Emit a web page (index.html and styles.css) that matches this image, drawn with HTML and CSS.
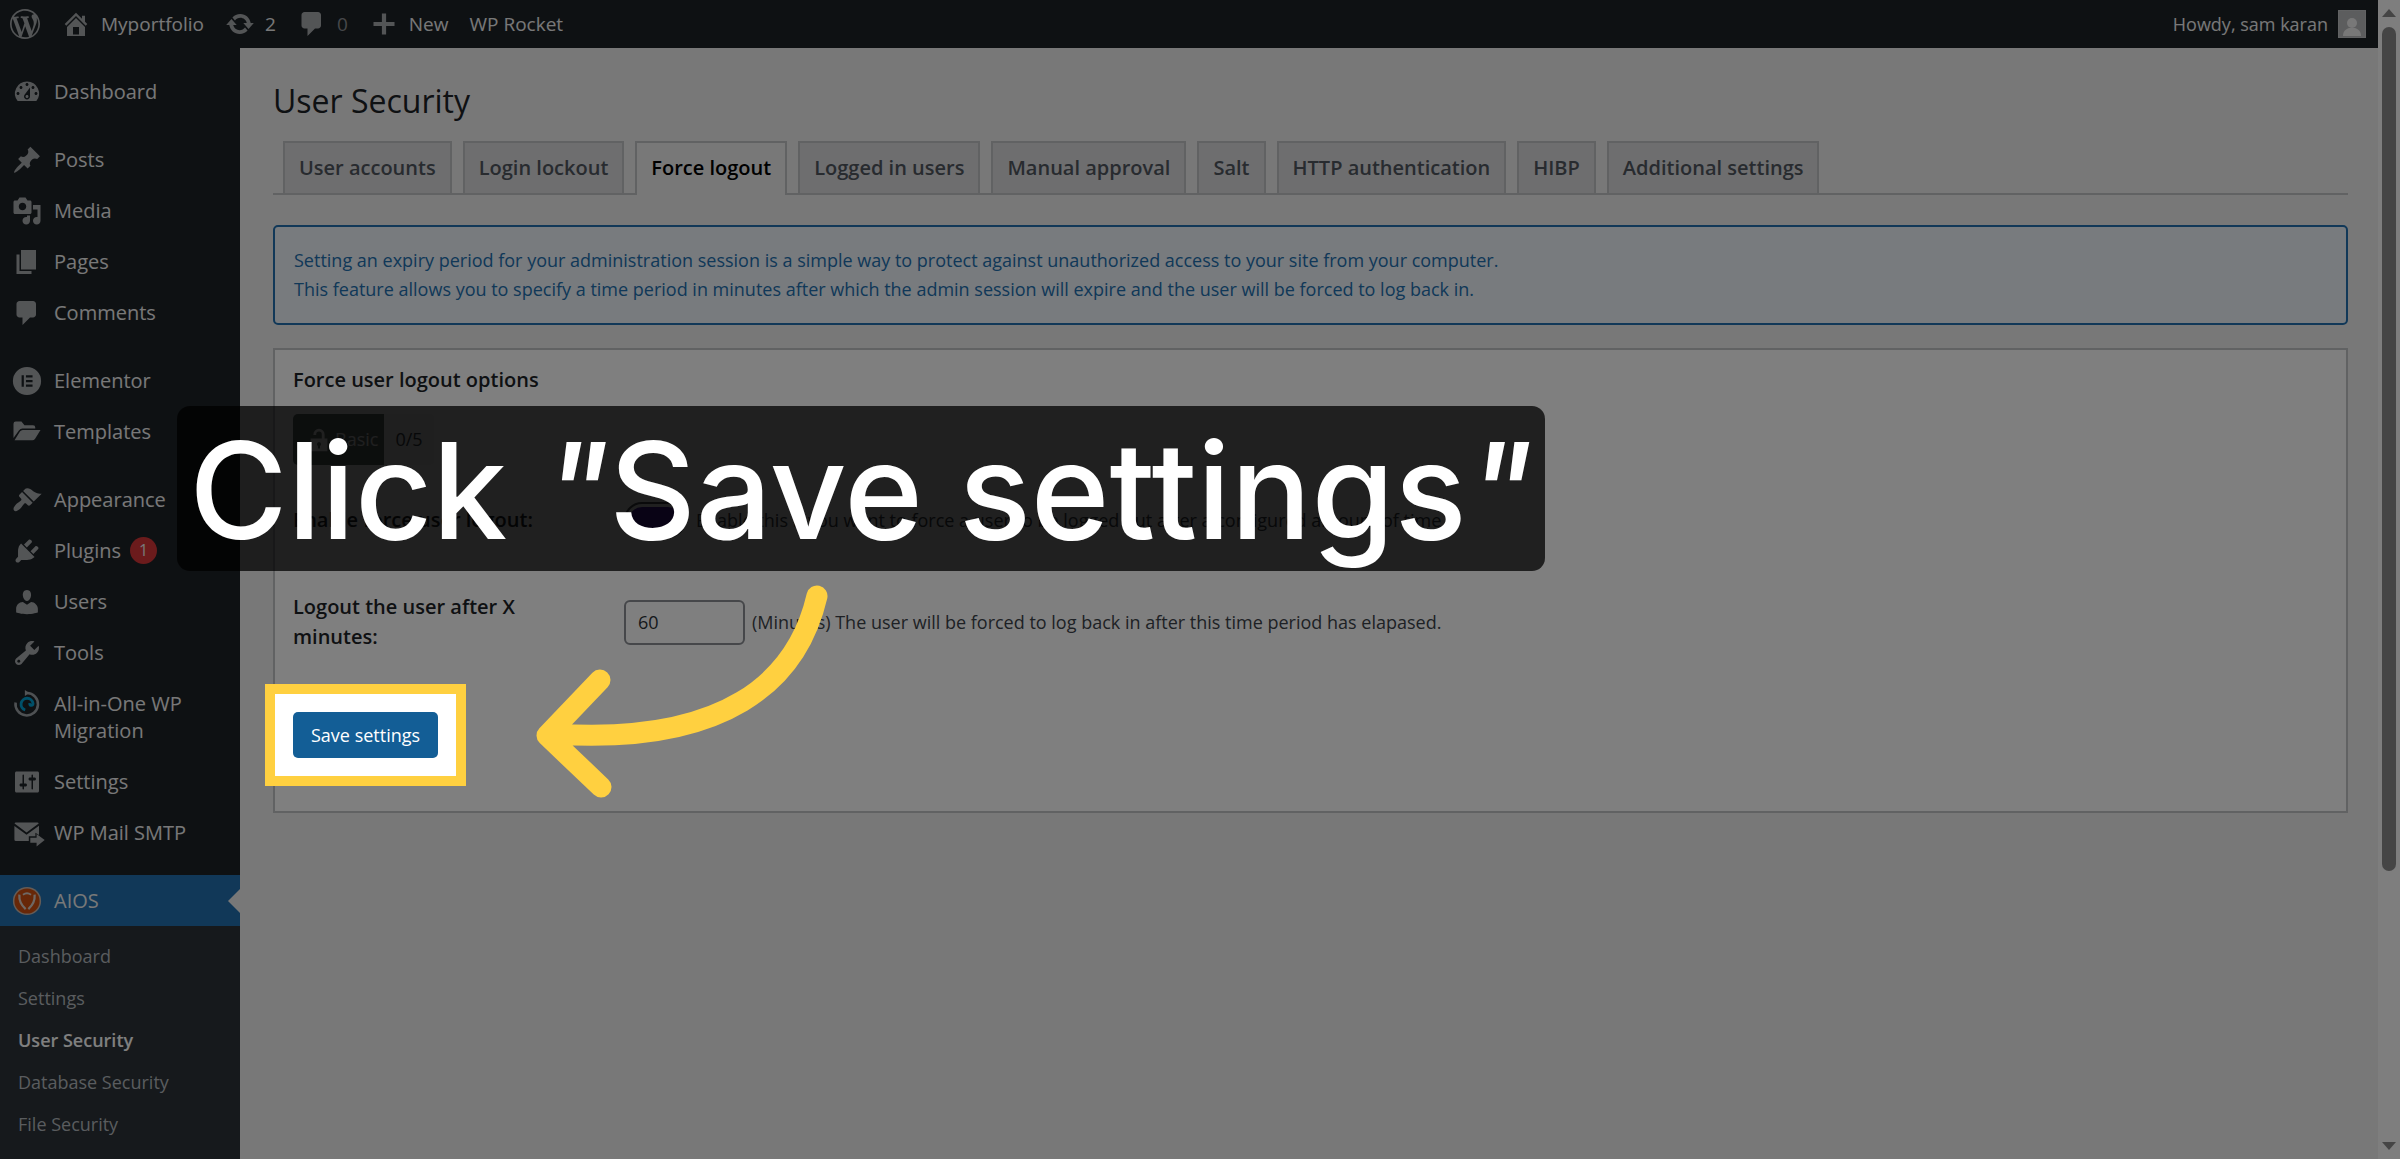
FILE: index.html
```html
<!DOCTYPE html>
<html lang="en">
<head>
<meta charset="utf-8">
<title>User Security</title>
<link rel="stylesheet" href="styles.css">
</head>
<body>
<div class="window">
  <div class="site">
    <header class="adminbar">
      <nav class="adminbar-group" aria-label="Toolbar">
        <a class="bar-item" href="#" aria-label="About WordPress"><svg class="icon wp" viewBox="0 0 20 20"><path d="M20 10c0-5.51-4.49-10-10-10C4.48 0 0 4.49 0 10c0 5.52 4.48 10 10 10 5.51 0 10-4.48 10-10zM7.78 15.37L4.37 6.22c.55-.02 1.17-.08 1.17-.08.5-.06.44-1.13-.06-1.11 0 0-1.45.11-2.37.11-.18 0-.37 0-.58-.01C4.12 2.69 6.87 1.11 10 1.11c2.33 0 4.45.87 6.05 2.34-.68-.11-1.65.39-1.65 1.58 0 .74.45 1.36.9 2.1.35.61.55 1.36.55 2.46 0 1.49-1.4 5-1.4 5l-3.03-8.37c.54-.02.82-.17.82-.17.5-.05.44-1.25-.06-1.22 0 0-1.44.12-2.38.12-.87 0-2.33-.12-2.33-.12-.5-.03-.56 1.2-.06 1.22l.92.08 1.26 3.41zM17.41 10c.24-.64.74-1.87.43-4.25.7 1.29 1.05 2.71 1.05 4.25 0 3.29-1.73 6.24-4.4 7.78.97-2.59 1.94-5.2 2.92-7.78zM6.1 18.09C3.12 16.65 1.11 13.53 1.11 10c0-1.3.23-2.48.72-3.59C3.25 10.3 4.67 14.2 6.1 18.09zm4.03-6.63l2.58 6.98c-.86.29-1.76.45-2.71.45-.79 0-1.57-.11-2.29-.33.81-2.38 1.62-4.74 2.42-7.1z"/></svg></a>
        <a class="bar-item" href="#"><svg class="icon" viewBox="0 0 20 20"><path d="M16 8.5l1.53 1.53-1.06 1.06L10 4.6l-6.47 6.49-1.06-1.06L10 2.5l4 4v-2h2v4zm-6-2.46l6 5.99V18H4v-5.97zM12 17v-5H8v5h4z"/></svg>Myportfolio</a>
        <a class="bar-item" href="#"><svg class="icon" viewBox="0 0 20 20"><path d="M10.2 3.28c3.53 0 6.43 2.61 6.92 6h2.08l-3.5 4-3.5-4h2.32c-.45-1.97-2.21-3.45-4.32-3.45-1.45 0-2.73.71-3.54 1.78L4.95 5.66C6.23 4.2 8.11 3.28 10.2 3.28zm-.4 13.44c-3.52 0-6.43-2.61-6.92-6H.8l3.5-4c1.17 1.33 2.33 2.67 3.5 4H5.48c.45 1.97 2.21 3.45 4.32 3.45 1.45 0 2.73-.71 3.54-1.78l1.71 1.95c-1.28 1.46-3.15 2.38-5.25 2.38z"/></svg>2</a>
        <a class="bar-item muted" href="#"><svg class="icon" viewBox="0 0 20 20"><path d="M5 2h9c1.1 0 2 .9 2 2v7c0 1.1-.9 2-2 2h-2l-5 5v-5H5c-1.1 0-2-.9-2-2V4c0-1.1.9-2 2-2z"/></svg>0</a>
        <a class="bar-item" href="#"><svg class="icon" viewBox="0 0 20 20"><path d="M17 8.600v2.800h-5.600V17H8.600v-5.600H3V8.600h5.600V3h2.800v5.600z"/></svg>New</a>
        <a class="bar-item" href="#">WP Rocket</a>
      </nav>
      <a class="bar-item account" href="#">Howdy, sam karan
        <svg class="avatar" viewBox="0 0 28 28"><rect width="28" height="28" fill="#c3c4c7"/><rect x="1" y="1" width="26" height="26" fill="#b9babc"/><circle cx="14" cy="13" r="5" fill="#f0f0f1"/><path d="M5 26c0-5 3-7 6-8h6c3 1 6 3 6 8z" fill="#f0f0f1"/></svg>
      </a>
    </header>
    <div class="columns">
      <nav class="sidebar" aria-label="Main menu">
        <ul class="menu">
          <li><a href="#"><svg class="icon" viewBox="0 0 20 20"><path fill-rule="evenodd" d="M3.76 16h12.48A7.998 7.998 0 0 0 10 3a7.998 7.998 0 0 0-6.24 13zM10 4c.55 0 1 .45 1 1s-.45 1-1 1-1-.45-1-1 .45-1 1-1zM6 6c.55 0 1 .45 1 1s-.45 1-1 1-1-.45-1-1 .45-1 1-1zm8 0c.55 0 1 .45 1 1s-.45 1-1 1-1-.45-1-1 .45-1 1-1zm-5.370 5.550L12 7v6c0 1.100-.9 2-2 2s-2-.9-2-2c0-.57.24-1.080.63-1.450zM4 10c.55 0 1 .45 1 1s-.45 1-1 1-1-.45-1-1 .45-1 1-1zm12 0c.55 0 1 .45 1 1s-.45 1-1 1-1-.45-1-1 .45-1 1-1zm-5 3c0-.55-.45-1-1-1s-1 .45-1 1 .45 1 1 1 1-.45 1-1z"/></svg>Dashboard</a></li>
          <li class="group"><a href="#"><svg class="icon" viewBox="0 0 20 20"><path d="M10.44 3.02l1.82-1.82 6.36 6.35-1.83 1.82c-1.05-.68-2.48-.57-3.41.36l-.75.75c-.92.93-1.04 2.35-.35 3.41l-1.83 1.82-2.41-2.41-2.8 2.79c-.42.42-3.38 2.71-3.8 2.29s1.86-3.39 2.28-3.81l2.79-2.79L4.1 9.36l1.83-1.82c1.05.69 2.48.57 3.4-.36l.75-.75c.93-.92 1.05-2.35.36-3.41z"/></svg>Posts</a></li>
          <li><a href="#"><svg class="icon" viewBox="0 0 20 20"><path fill-rule="evenodd" d="M13 11V4c0-.55-.45-1-1-1h-1.67L9 1H5L3.67 3H2c-.55 0-1 .45-1 1v7c0 .55.45 1 1 1h10c.55 0 1-.45 1-1zM7 4.5c1.38 0 2.5 1.12 2.5 2.5S8.38 9.5 7 9.5 4.5 8.38 4.5 7 5.62 4.5 7 4.5zM14 6h5v10.5c0 1.38-1.12 2.5-2.5 2.5S14 17.88 14 16.5s1.12-2.5 2.5-2.5c.17 0 .34.02.5.05V9h-3V6zm-4 8.05V13h2v3.5c0 1.38-1.12 2.5-2.5 2.5S7 17.88 7 16.5 8.12 14 9.5 14c.17 0 .34.02.5.05z"/></svg>Media</a></li>
          <li><a href="#"><svg class="icon" viewBox="0 0 20 20"><path d="M6 15V2h10v13H6zm-1 1h8v2H3V5h2v11z"/></svg>Pages</a></li>
          <li><a href="#"><svg class="icon" viewBox="0 0 20 20"><path d="M5 2h9c1.100 0 2 .9 2 2v7c0 1.100-.9 2-2 2h-2l-5 5v-5H5c-1.100 0-2-.9-2-2V4c0-1.100.9-2 2-2z"/></svg>Comments</a></li>
          <li class="group"><a href="#"><svg class="icon" viewBox="0 0 20 20"><path fill-rule="evenodd" d="M10 .6a9.400 9.400 0 1 0 0 18.800 9.400 9.400 0 0 0 0-18.800zM6.400 6.200h1.500v7.600H6.400zM9.300 6.200h4.400v1.500H9.300zM9.300 9.250h4.400v1.500H9.300zM9.300 12.300h4.400v1.500H9.300z"/></svg>Elementor</a></li>
          <li><a href="#"><svg class="icon" viewBox="0 0 20 20"><path d="M1 14V4.500Q1 3 2.500 3h3.800l2 2.500H14q1.500 0 1.500 1.500v.6H7Q5.500 7.600 4.600 9zM1.700 15.500L5.300 9.700Q6 8.600 7.200 8.600H19l-3.600 5.900q-.7 1-1.900 1z"/></svg>Templates</a></li>
          <li class="group"><a href="#"><svg class="icon" viewBox="0 0 20 20"><path d="M14.48 11.06L7.41 3.99l1.5-1.5c.5-.56 2.3-.47 3.51.32 1.21.8 1.43 1.28 2.91 2.1 1.18.64 2.45 1.26 4.45.85zm-.71.71L6.7 4.7 4.93 6.47c-.39.39-.39 1.02 0 1.41l1.06 1.06c.39.39.39 1.03 0 1.42-.6.6-1.43 1.11-2.21 1.69-.35.26-.7.53-1.01.84C1.43 14.23.4 16.08 1.4 17.07c.99 1 2.84-.03 4.18-1.36.31-.31.58-.66.85-1.02.57-.78 1.08-1.61 1.69-2.21.39-.39 1.02-.39 1.41 0l1.06 1.06c.39.39 1.02.39 1.41 0z"/></svg>Appearance</a></li>
          <li><a href="#"><svg class="icon" viewBox="0 0 20 20"><path d="M13.11 4.36L9.87 7.6 8 5.73l3.24-3.24c.35-.34 1.05-.2 1.56.32.52.51.66 1.21.31 1.55zm-8 1.77l.91-1.12 9.01 9.01-1.19.84c-.71.71-2.63 1.16-3.82 1.16H6.14L4.9 17.26c-.59.59-1.54.59-2.12 0-.59-.58-.59-1.53 0-2.12l1.24-1.24v-3.88c0-1.13.4-3.19 1.09-3.89zm7.26 3.97l3.24-3.24c.34-.35 1.04-.21 1.55.31.52.51.66 1.21.31 1.55l-3.24 3.25z"/></svg>Plugins <span class="count">1</span></a></li>
          <li><a href="#"><svg class="icon" viewBox="0 0 20 20"><path d="M10 9.25c-2.27 0-2.73-3.44-2.73-3.44C7 4.02 7.82 2 9.97 2c2.16 0 2.98 2.02 2.71 3.81 0 0-.41 3.44-2.68 3.44zm0 2.57L12.72 10c2.39 0 4.52 2.33 4.52 4.53v2.49s-3.65 1.13-7.24 1.13c-3.65 0-7.24-1.13-7.24-1.13v-2.49c0-2.25 1.94-4.48 4.47-4.48z"/></svg>Users</a></li>
          <li><a href="#"><svg class="icon" viewBox="0 0 20 20"><path fill-rule="evenodd" d="M16.68 9.77c-1.34 1.34-3.3 1.67-4.95.99l-5.41 6.52c-.99.99-2.59.99-3.58 0s-.99-2.59 0-3.57l6.52-5.42c-.68-1.65-.35-3.61.99-4.95 1.28-1.28 3.12-1.62 4.72-1.06l-2.89 2.89 2.82 2.82 2.86-2.87c.53 1.58.18 3.39-1.08 4.65zM3.81 16.21c.4.39 1.04.39 1.43 0 .4-.4.4-1.04 0-1.43-.39-.4-1.03-.4-1.43 0-.39.39-.39 1.03 0 1.43z"/></svg>Tools</a></li>
          <li><a href="#"><svg class="icon" viewBox="0 0 20 20"><path d="M2.400 9A7.500 7.500 0 1 0 10 2.600" fill="none" stroke="#9ca2a7" stroke-width="1.700"/><path d="M8.600.6l3 2-3 2z"/><path d="M8.800 14A4 4 0 1 1 14 9.600q0 1.500-1.300 1.300-1-.2-.8-1.500" fill="none" stroke="#00a0d2" stroke-width="1.900"/></svg>All-in-One WP Migration</a></li>
          <li><a href="#"><svg class="icon" viewBox="0 0 20 20"><path fill-rule="evenodd" d="M18 16V4c0-.55-.45-1-1-1H3c-.55 0-1 .45-1 1v12c0 .55.45 1 1 1h14c.55 0 1-.45 1-1zM8 11h1c.55 0 1 .45 1 1s-.45 1-1 1H8v1.5c0 .28-.22.5-.5.5s-.5-.22-.5-.5V13H6c-.55 0-1-.45-1-1s.45-1 1-1h1V5.500c0-.28.22-.5.5-.5s.5.22.5.5V11zm5-2h-1c-.55 0-1-.45-1-1s.45-1 1-1h1V5.500c0-.28.22-.5.5-.5s.5.22.5.5V7h1c.55 0 1 .45 1 1s-.45 1-1 1h-1v5.500c0 .28-.22.5-.5.5s-.5-.22-.5-.5V9z"/></svg>Settings</a></li>
          <li><a href="#"><svg class="icon" viewBox="0 0 20 20"><path d="M2.500 3h14.400q.7 0 .9.600l-8.100 6-8-6Q1.900 3 2.500 3zM1.600 5.400l8.100 5.800L18 5.200v6.200l-2.400-1.600v2.400h-4.400v3.200H2.600q-1 0-1-1z"/><path d="M12.200 13.100h4.200V10.600L21.800 14.700 16.400 19v-2.500h-4.200z"/></svg>WP Mail SMTP</a></li>
          <li class="group current"><a href="#" aria-current="true"><svg class="icon" viewBox="0 0 20 20"><circle cx="10" cy="10" r="9.400" fill="#c9b8ae"/><circle cx="10" cy="10" r="8.400" fill="#cf4f10"/><path d="M7.300 5.800Q10 4 12.700 5.800" fill="none" stroke="#ddd0c8" stroke-width="1.300"/><path d="M4.900 5.800q-.4 5.600 4.200 9.600M15.100 5.800q.4 5.600-4.200 9.600" fill="none" stroke="#ddd0c8" stroke-width="1.500"/></svg>AIOS</a></li>
        </ul>
        <ul class="submenu">
          <li><a href="#">Dashboard</a></li>
          <li><a href="#">Settings</a></li>
          <li><a class="active" href="#">User Security</a></li>
          <li><a href="#">Database Security</a></li>
          <li><a href="#">File Security</a></li>
        </ul>
      </nav>
      <main class="content">
        <h1>User Security</h1>
        <nav class="tabs" aria-label="User security sections">
          <a href="#">User accounts</a>
          <a href="#">Login lockout</a>
          <a class="active" href="#">Force logout</a>
          <a href="#">Logged in users</a>
          <a href="#">Manual approval</a>
          <a href="#">Salt</a>
          <a href="#">HTTP authentication</a>
          <a href="#">HIBP</a>
          <a href="#">Additional settings</a>
        </nav>
        <p class="notice">Setting an expiry period for your administration session is a simple way to protect against unauthorized access to your site from your computer.<br>This feature allows you to specify a time period in minutes after which the admin session will expire and the user will be forced to log back in.</p>
        <form class="card">
          <h2>Force user logout options</h2>
          <div class="badge"><span class="level"><svg class="lock" viewBox="0 0 20 20"><path fill-rule="evenodd" d="M4 9h8V6a2 2 0 0 0-4 0v.5H6V6a4 4 0 0 1 8 0v3h2v9H4zm6 2.500a1.500 1.500 0 0 0-.7 2.800V16h1.400v-1.700a1.500 1.500 0 0 0-.7-2.800z"/></svg>Basic</span><span class="score">0/5</span></div>
          <div class="row">
            <label class="name" for="enable">Enable force user logout:</label>
            <div class="field"><input class="toggle" id="enable" type="checkbox" checked><span>Enable this if you want to force a user to be logged out after a configured amount of time</span></div>
          </div>
          <div class="row">
            <label class="name" for="minutes">Logout the user after X minutes:</label>
            <div class="field"><input class="number" id="minutes" type="text" value="60"><span>(Minutes) The user will be forced to log back in after this time period has elapased.</span></div>
          </div>
          <div class="actions"><button class="save" type="button">Save settings</button><span class="spotlight"></span></div>
        </form>
      </main>
    </div>
  </div>
  <div class="scrollbar">
    <svg class="arrow" viewBox="0 0 14 8"><path d="M0 8L7 0l7 8z"/></svg>
    <div class="thumb"></div>
    <svg class="arrow" viewBox="0 0 14 8"><path d="M0 0l7 8 7-8z"/></svg>
  </div>
</div>
<div class="callout">Click <i>"</i>Save settings<i>"</i></div>
<svg class="pointer" viewBox="0 0 300 220"><path d="M287 16C267 102 195 165 24 154M70 100L17 155.500 71 207"/></svg>
</body>
</html>
```
FILE: styles.css
```css
* { box-sizing: border-box; }
body {
  margin: 0;
  background: #f0f0f1;
  color: #3c434a;
  font: 18px/28px "Open Sans", "Noto Sans", sans-serif;
}
a { color: inherit; text-decoration: none; }
ul { list-style: none; margin: 0; padding: 0; }
.icon { width: 30px; height: 30px; fill: #a7aaad; flex: none; overflow: visible; }

.window { display: flex; min-height: 100vh; }
.site { flex: 1; display: flex; flex-direction: column; min-width: 0; }

.adminbar {
  display: flex;
  justify-content: space-between;
  height: 48px;
  padding: 0 12px 0 10px;
  background: #1d2327;
  color: #f0f0f1;
}
.adminbar-group { display: flex; gap: 21px; font-size: 19px; }
.bar-item { display: flex; align-items: center; gap: 10px; }
.bar-item.muted { color: #8c8f94; }
.avatar { width: 28px; height: 28px; }

.columns { flex: 1; display: flex; }
.sidebar {
  width: 240px;
  flex: none;
  display: flex;
  flex-direction: column;
  padding-top: 18px;
  background: #1d2327;
  color: #f0f0f1;
}
.menu a {
  display: flex;
  gap: 12px;
  padding: 12px 20px 12px 12px;
  font-size: 20px;
  line-height: 27px;
}
.menu .group { margin-top: 17px; }
.menu .current { position: relative; background: #2271b1; }
.menu .current::after {
  content: "";
  position: absolute;
  right: 0;
  top: 14px;
  border: 12px solid transparent;
  border-left: 0;
  border-right-color: #f0f0f1;
}
.menu .icon { margin: -1px 0 -2px; }
.count {
  width: 27px;
  height: 27px;
  margin-left: -3px;
  border-radius: 50%;
  background: #d63638;
  font-size: 16px;
  text-align: center;
}
.submenu {
  flex: 1;
  padding: 9px 18px 0;
  background: #2c3338;
  color: #b4b9be;
}
.submenu a { display: block; line-height: 42px; }
.submenu .active { color: #fff; font-weight: 600; }

.content { flex: 1; min-width: 0; padding: 30px 30px 0 33px; }
h1 {
  margin: 0 0 18px;
  color: #1d2327;
  font-size: 32px;
  font-weight: 400;
  line-height: 45px;
}
.tabs {
  display: flex;
  gap: 11px;
  padding: 0 10px;
  border-bottom: 2px solid #c3c4c7;
}
.tabs a {
  padding: 11px 14px;
  border: 2px solid #c3c4c7;
  border-bottom: 0;
  background: #dcdcde;
  color: #50575e;
  font-size: 20px;
  font-weight: 600;
  line-height: 28px;
}
.tabs .active {
  margin-bottom: -2px;
  padding-bottom: 13px;
  background: #f0f0f1;
  color: #000;
}
.notice {
  margin: 30px 0 23px;
  padding: 19px;
  border: 2px solid #2271b1;
  border-radius: 5px;
  background: #f0f6fc;
  color: #2271b1;
  line-height: 29px;
}
.card {
  padding: 16px 18px 53px;
  border: 2px solid #c3c4c7;
  background: #fff;
}
h2 {
  margin: 0 0 20px;
  color: #1d2327;
  font-size: 20px;
  font-weight: 600;
  line-height: 28px;
}
.badge {
  display: flex;
  width: fit-content;
  margin-bottom: 4px;
  border-radius: 5px;
  overflow: hidden;
  background: #f6f6f7;
  line-height: 51px;
}
.level {
  display: flex;
  align-items: center;
  gap: 2px;
  padding: 0 6px 0 12px;
  background: #65726f;
  color: #fff;
}
.lock { width: 28px; height: 28px; fill: #fff; }
.score { padding: 0 11px; }
.row { display: flex; align-items: center; min-height: 102px; }
.name {
  width: 331px;
  padding-right: 70px;
  color: #1d2327;
  font-size: 20px;
  font-weight: 600;
  line-height: 30px;
}
.field { display: flex; align-items: center; gap: 7px; }
.toggle {
  appearance: none;
  width: 58px;
  height: 32px;
  margin: 0 5px 0 2px;
  border: 3px solid #fff;
  border-radius: 16px;
  background: #4b1fa8;
  outline: 2px solid #50575e;
}
.number {
  width: 121px;
  height: 45px;
  padding: 0 12px;
  border: 2px solid #8c8f94;
  border-radius: 6px;
  background: #fff;
  color: #2c3338;
  font: inherit;
}
.actions { position: relative; width: fit-content; margin-top: 39px; }
.save {
  display: block;
  height: 46px;
  padding: 0 18px;
  border: 0;
  border-radius: 5px;
  background: #135e96;
  color: #fff;
  font: inherit;
}
/* Yellow frame with the rest of the page dimmed around it. */
.spotlight {
  position: absolute;
  inset: -28px;
  border: 10px solid #ffd040;
  box-shadow: 0 0 0 9999px rgba(0, 0, 0, 0.5);
  pointer-events: none;
}

.scrollbar {
  width: 22px;
  flex: none;
  display: flex;
  flex-direction: column;
  align-items: center;
  padding: 9px 0;
  background: #fcfcfc;
}
.arrow { width: 14px; height: 8px; fill: #8b8b8b; }
.thumb { width: 14px; height: 74%; margin: 10px 0 auto; border-radius: 7px; background: #8b8b8b; }

.callout {
  position: absolute;
  left: 177px;
  top: 406px;
  width: 1368px;
  padding-top: 4px;
  border-radius: 13px;
  background: rgba(0, 0, 0, 0.75);
  color: #fff;
  font: 500 134px/161px Inter, "Open Sans", sans-serif;
  text-align: center;
  white-space: nowrap;
}
.pointer {
  position: absolute;
  left: 530px;
  top: 580px;
  width: 300px;
  height: 220px;
  fill: none;
  stroke: #ffd040;
  stroke-width: 21;
  stroke-linecap: round;
  stroke-linejoin: round;
}
```
